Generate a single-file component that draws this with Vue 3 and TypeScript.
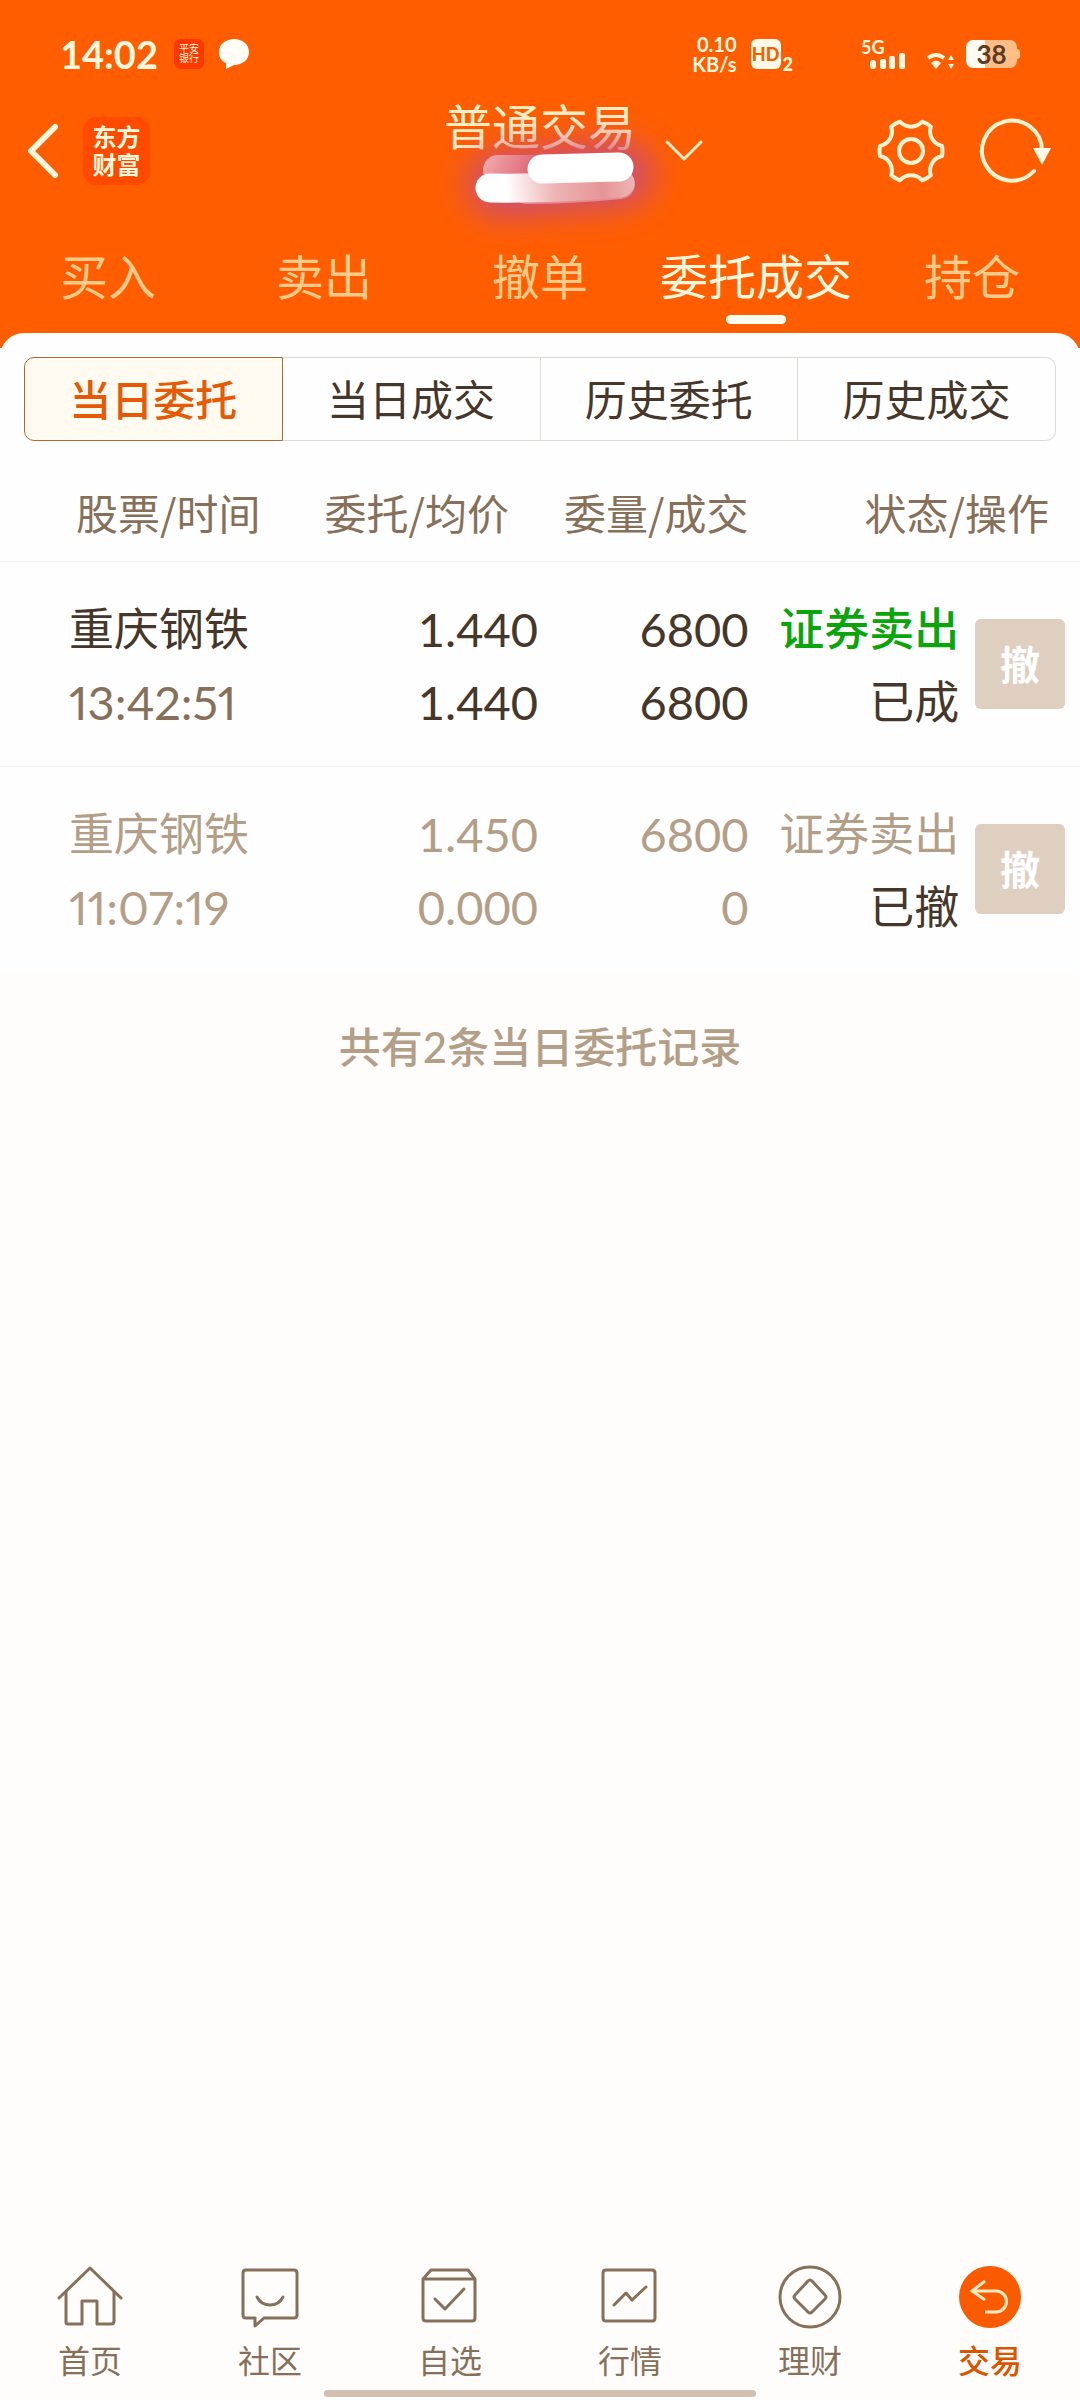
<script setup lang="ts">
import { ref } from 'vue'

interface Order {
  name: string
  time: string
  price: string
  average: string
  amount: string
  filled: string
  side: string
  state: string
  cancelled: boolean
}

const sections = ['买入', '卖出', '撤单', '委托成交', '持仓']
const activeSection = ref('委托成交')

const views = ['当日委托', '当日成交', '历史委托', '历史成交']
const activeView = ref('当日委托')

const orders: Order[] = [
  { name: '重庆钢铁', time: '13:42:51', price: '1.440', average: '1.440', amount: '6800', filled: '6800', side: '证券卖出', state: '已成', cancelled: false },
  { name: '重庆钢铁', time: '11:07:19', price: '1.450', average: '0.000', amount: '6800', filled: '0', side: '证券卖出', state: '已撤', cancelled: true },
]

const navItems = [
  { label: '首页', paths: ['M5 37 36 7 67 37', 'M12 31V61Q12 63 14 63H28V40H43V63H57Q60 63 60 60V31'] },
  { label: '社区', paths: ['M11 9H60Q63 9 63 12V54Q63 57 60 57H30L21 65V57H12Q9 57 9 54V12Q9 9 12 9', 'M23 36Q27 44 36 44T49 36'] },
  { label: '自选', paths: ['M9 18 17 9H54L61 18V57Q61 60 58 60H12Q9 60 9 57V18H61', 'M21 38 31 48 50 28'] },
  { label: '行情', paths: ['M12 9H58Q61 9 61 12V57Q61 60 58 60H12Q9 60 9 57V12Q9 9 12 9', 'M20 44 32 32 38 39 52 26'] },
  { label: '理财', paths: ['M6 36A30 30 0 0 1 66 36A30 30 0 0 1 6 36', 'M34 20Q36 18 38 20L51 34Q53 36 51 38L38 51Q36 53 34 51L21 38Q19 36 21 34Z'] },
]

// Six-lobed gear: every lobe has two corners, joined to the next by a hollow curve.
function gearOutline(): string {
  const at = (x: number, y: number, turn: number) => {
    const a = (turn * Math.PI) / 3
    return `${(34 + x * Math.cos(a) - y * Math.sin(a)).toFixed(1)} ${(34 + x * Math.sin(a) + y * Math.cos(a)).toFixed(1)}`
  }
  let d = `M${at(31, -5, 0)}`
  for (let i = 0; i < 6; i++) {
    d += `Q${at(32, 0, i)} ${at(31, 5, i)}`
    d += `C${at(22, 7, i)} ${at(22, -7, i + 1)} ${at(31, -5, i + 1)}`
  }
  return d + 'Z'
}
const gear = gearOutline()
</script>

<template>
  <div class="page">
    <header class="top">
      <div class="status">
        <span class="clock">14:02</span>
        <span class="bank">平安<br />银行</span>
        <svg class="bubble" width="32" height="32" viewBox="0 0 32 32" aria-hidden="true">
          <path d="M16 1C24 1 31 6 31 14S24 27 16 27L8 31V25C3 23 1 19 1 14C1 6 8 1 16 1Z" fill="#fffdf5" />
        </svg>
        <span class="speed">0.10<br />KB/s</span>
        <span class="hd">HD</span>
        <span class="sim">2</span>
        <span class="signal">
          <span class="net">5G</span>
          <svg width="46" height="32" viewBox="0 0 46 32" aria-hidden="true">
            <g fill="#fff8dc">
              <rect x="9" y="22" width="6" height="9" rx="3" />
              <rect x="19" y="21" width="6" height="10" rx="2" />
              <rect x="28" y="18" width="6" height="13" rx="2" />
              <rect x="38" y="15" width="6" height="16" rx="2" />
            </g>
          </svg>
        </span>
        <svg class="wifi" width="28" height="32" viewBox="0 0 28 32" aria-hidden="true">
          <path d="M1 20Q9 14 17 20" fill="none" stroke="#fff8dc" stroke-width="4" />
          <path d="M4 25Q9 20 14 25L9 31Z" fill="#fff8dc" />
          <path d="M21 22 24 17 27 22ZM21 26 24 31 27 26Z" fill="#fff8dc" />
        </svg>
        <span class="battery">38</span>
      </div>

      <div class="bar">
        <div class="bar-left">
          <button class="plain" type="button" aria-label="返回">
            <svg width="34" height="58" viewBox="0 0 34 58">
              <path d="M30 5 6 29 30 53" fill="none" stroke="#fff8dc" stroke-width="6" stroke-linecap="round" stroke-linejoin="round" />
            </svg>
          </button>
          <span class="logo">东方<br />财富</span>
        </div>
        <div class="title">
          <h1>普通交易</h1>
          <svg class="scribble" width="320" height="180" viewBox="0 0 320 180" aria-hidden="true">
            <defs>
              <filter id="soft" x="0" y="0" width="320" height="180" filterUnits="userSpaceOnUse">
                <feGaussianBlur stdDeviation="16" />
              </filter>
              <linearGradient id="upper" gradientUnits="userSpaceOnUse" x1="82" y1="70" x2="140" y2="100">
                <stop offset="0" stop-color="#f5b4b4" />
                <stop offset="1" stop-color="#d9566a" />
              </linearGradient>
              <linearGradient id="lower" gradientUnits="userSpaceOnUse" x1="75" y1="115" x2="234" y2="100">
                <stop offset="0.2" stop-color="#ffffff" />
                <stop offset="0.5" stop-color="#eeb4b6" />
                <stop offset="0.8" stop-color="#e69496" />
                <stop offset="1" stop-color="#efb5b5" />
              </linearGradient>
            </defs>
            <g fill="none" stroke-linecap="round">
              <path d="M100 104 220 94" stroke="#cc5076" stroke-width="66" filter="url(#soft)" />
              <path d="M98 90H180" stroke="url(#upper)" stroke-width="30" />
              <path d="M126 109Q170 109 220 104" stroke="#e58a92" stroke-width="30" />
              <path d="M90 108Q150 109 220 103" stroke="url(#lower)" stroke-width="29" />
              <path d="M142 89 219 87" stroke="#ffffff" stroke-width="29" />
            </g>
          </svg>
        </div>
        <div class="bar-right">
          <button class="plain account" type="button" aria-label="切换账户">
            <svg width="38" height="22" viewBox="0 0 38 22">
              <path d="M2 2 19 19 36 2" fill="none" stroke="#fff0c8" stroke-width="3" stroke-linecap="round" />
            </svg>
          </button>
          <button class="plain" type="button" aria-label="设置">
            <svg width="68" height="68" viewBox="0 0 68 68">
              <g fill="none" stroke="#fff4d2" stroke-width="4" stroke-linejoin="round">
                <path :d="gear" />
                <circle cx="34" cy="34" r="12" />
              </g>
            </svg>
          </button>
          <button class="plain" type="button" aria-label="刷新">
            <svg width="72" height="68" viewBox="0 0 72 68">
              <path d="M63 34A30 30 0 1 0 55 54" fill="none" stroke="#fff4d2" stroke-width="4" stroke-linecap="round" />
              <path d="M54 31H72L63 48Z" fill="#fffbe8" />
            </svg>
          </button>
        </div>
      </div>

      <nav class="sections" aria-label="交易">
        <a v-for="s in sections" :key="s" href="#" :class="{ on: s === activeSection }" @click.prevent="activeSection = s">{{ s }}</a>
      </nav>
    </header>

    <main class="sheet">
      <div class="views">
        <button v-for="v in views" :key="v" type="button" :class="{ on: v === activeView }" @click="activeView = v">{{ v }}</button>
      </div>

      <table class="orders">
        <colgroup>
          <col class="c-name" />
          <col class="c-price" />
          <col class="c-num" />
          <col class="c-num" />
          <col />
        </colgroup>
        <thead>
          <tr>
            <th class="h-name">股票/时间</th>
            <th class="h-price">委托/均价</th>
            <th>委量/成交</th>
            <th class="h-state" colspan="2">状态/操作</th>
          </tr>
        </thead>
        <tbody>
          <tr v-for="o in orders" :key="o.time" :class="{ dim: o.cancelled }">
            <td class="name"><div>{{ o.name }}</div><div class="time">{{ o.time }}</div></td>
            <td class="num"><div>{{ o.price }}</div><div>{{ o.average }}</div></td>
            <td class="num"><div>{{ o.amount }}</div><div>{{ o.filled }}</div></td>
            <td><div class="side">{{ o.side }}</div><div class="state">{{ o.state }}</div></td>
            <td class="action"><button type="button">撤</button></td>
          </tr>
        </tbody>
      </table>

      <p class="summary">共有2条当日委托记录</p>
    </main>

    <footer class="dock">
      <nav class="dock-items" aria-label="主导航">
        <a v-for="n in navItems" :key="n.label" href="#">
          <svg width="72" height="72" viewBox="0 0 72 72" aria-hidden="true">
            <g fill="none" stroke="#87705a" stroke-width="3" stroke-linecap="round" stroke-linejoin="round">
              <path v-for="p in n.paths" :key="p" :d="p" />
            </g>
          </svg>
          {{ n.label }}
        </a>
        <a href="#" class="on">
          <svg width="72" height="72" viewBox="0 0 72 72" aria-hidden="true">
            <circle cx="36" cy="36" r="31" fill="#fa5a00" />
            <path d="M31 20 18 30 31 39M18 30H42A10 10 0 0 1 42 51H31" fill="none" stroke="#ffe9bf" stroke-width="3" />
          </svg>
          交易
        </a>
      </nav>
      <div class="handle"></div>
    </footer>
  </div>
</template>

<style>
body {
  background: #fefdfc;
}
</style>

<style scoped>
.page {
  display: flex;
  flex-direction: column;
  min-height: 100vh;
  font-family: Lato, 'Noto Sans CJK SC', sans-serif;
  color: #45372a;
}
button {
  font-family: inherit;
  cursor: pointer;
}
a {
  text-decoration: none;
}
.plain {
  display: block;
  padding: 0;
  border: 0;
  background: none;
}
svg {
  display: block;
}

/* Header */
.top {
  background: #ff5d00;
  color: #fff8dc;
}
.status {
  display: flex;
  align-items: center;
  height: 88px;
  box-sizing: border-box;
  padding: 20px 63px 0 60px;
}
.clock {
  font-size: 38px;
  font-weight: 700;
  line-height: 40px;
}
.bank {
  width: 30px;
  height: 30px;
  box-sizing: border-box;
  margin-left: 16px;
  padding-top: 4px;
  border-radius: 6px;
  background: #ff3800;
  font-size: 10px;
  line-height: 10px;
  text-align: center;
}
.bubble {
  margin-left: 14px;
}
.speed {
  margin-left: auto;
  font-weight: 700;
  font-size: 20px;
  line-height: 20px;
  text-align: right;
}
.hd {
  width: 30px;
  height: 30px;
  margin-left: 14px;
  border-radius: 6px;
  background: #fffbe8;
  color: #f06000;
  font-size: 18px;
  font-weight: 900;
  line-height: 30px;
  text-align: center;
}
.sim {
  align-self: flex-end;
  margin: 0 68px 14px 2px;
  font-size: 18px;
  font-weight: 900;
  line-height: 20px;
}
.signal {
  position: relative;
}
.net {
  position: absolute;
  top: 0;
  left: 0;
  font-size: 18px;
  font-weight: 700;
  line-height: 18px;
}
.wifi {
  margin-left: 20px;
}
.battery {
  position: relative;
  width: 51px;
  height: 28px;
  margin-left: 11px;
  border-radius: 7px;
  background: linear-gradient(90deg, #fffbf2 38%, #ffbe85 38%);
  color: #5e3a26;
  font-size: 26px;
  font-weight: 700;
  line-height: 28px;
  text-align: center;
}
.battery::after {
  content: '';
  position: absolute;
  top: 9px;
  right: -3px;
  width: 3px;
  height: 10px;
  border-radius: 0 3px 3px 0;
  background: #ffbe85;
}
.bar {
  display: grid;
  grid-template-columns: 1fr auto 1fr;
  height: 126px;
}
.bar-left,
.bar-right {
  display: flex;
  align-items: center;
}
.bar-left {
  gap: 24px;
  padding-left: 25px;
}
.bar-right {
  gap: 34px;
  padding-right: 29px;
}
.account {
  margin: 0 auto 0 29px;
}
.logo {
  width: 67px;
  height: 68px;
  box-sizing: border-box;
  padding-top: 6px;
  border-radius: 14px;
  background: #ff4a00;
  font-size: 24px;
  font-weight: 700;
  line-height: 28px;
  text-align: center;
}
.title {
  position: relative;
  padding-top: 9px;
}
.title h1 {
  margin: 0;
  font-size: 48px;
  font-weight: 400;
  line-height: 60px;
  color: #fff0c8;
}
.scribble {
  position: absolute;
  top: -8px;
  left: -44px;
  pointer-events: none;
}
.sections {
  display: flex;
  padding: 33px 0 24px;
}
.sections a {
  flex: 1 0 0;
  color: #ffca8a;
  font-size: 48px;
  line-height: 60px;
  text-align: center;
  white-space: nowrap;
}
.sections a::after {
  content: '';
  display: block;
  width: 60px;
  height: 9px;
  margin: 8px auto 0;
  border-radius: 5px;
}
.sections a.on {
  color: #fff8dc;
}
.sections a.on::after {
  background: #fffdf0;
}

/* Orders */
.sheet {
  margin-top: -15px;
  padding-top: 24px;
  border-radius: 24px 24px 0 0;
  background: #fefefe;
}
.views {
  display: flex;
  margin: 0 24px;
}
.views button {
  flex: 1 0 0;
  height: 84px;
  padding: 0 0 3px;
  border: 1px solid #dfdad4;
  border-left-width: 0;
  background: #fefefe;
  color: #45372a;
  font-size: 42px;
}
.views button:first-child {
  border-left-width: 1px;
  border-radius: 10px 0 0 10px;
}
.views button:last-child {
  border-radius: 0 10px 10px 0;
}
.views button.on {
  border-color: #b06a30;
  background: #fffbf0;
  color: #e65a05;
  font-weight: 500;
}
.orders {
  width: 100%;
  table-layout: fixed;
  border-spacing: 0;
}
.c-name {
  width: 26%;
}
.c-price {
  width: 24%;
}
.c-num {
  width: 19.5%;
}
th {
  padding: 41px 2px 19px 0;
  color: #87705a;
  font-family: 'Noto Sans CJK SC', sans-serif;
  font-size: 42px;
  font-weight: 400;
  line-height: 60px;
  text-align: right;
  white-space: nowrap;
}
.h-name {
  padding-left: 76px;
  text-align: left;
}
.h-price,
.h-state {
  padding-right: 31px;
}
td {
  padding: 31px 2px 27px 0;
  border-top: 1px solid #f5f4ec;
  font-size: 45px;
  line-height: 73px;
  text-align: right;
  white-space: nowrap;
}
.name {
  padding-left: 69px;
  text-align: left;
}
.num,
.time {
  font-size: 47px;
}
.num {
  font-variant-numeric: tabular-nums;
}
.time {
  color: #87705a;
  font-variant-numeric: proportional-nums;
}
.side {
  color: #0aa50a;
  font-weight: 500;
}
.dim td,
.dim .time,
.dim .side {
  color: #b39e88;
  font-weight: 400;
}
.dim .state {
  color: #45372a;
}
.action {
  padding: 0 15px 0 0;
}
.action button {
  display: block;
  width: 90px;
  height: 90px;
  margin-left: auto;
  padding: 0 0 3px;
  border: 0;
  border-radius: 6px;
  background: #dfcfc1;
  color: #fff;
  font-size: 40px;
  font-weight: 700;
}
.summary {
  margin: 0;
  padding-top: 46px;
  background: #fefdfc;
  color: #b39e88;
  font-size: 42px;
  font-weight: 500;
  line-height: 60px;
  text-align: center;
}

/* Bottom navigation */
.dock {
  margin-top: auto;
  padding-bottom: 3px;
}
.dock-items {
  display: flex;
}
.dock-items a {
  display: flex;
  flex: 1 0 0;
  flex-direction: column;
  align-items: center;
  gap: 8px;
  color: #87705a;
  font-size: 32px;
  line-height: 40px;
}
.dock-items a.on {
  color: #d95500;
  font-weight: 500;
}
.handle {
  width: 40%;
  height: 7px;
  margin: 9px auto 0;
  border-radius: 4px;
  background: #d2c0b0;
}
</style>
